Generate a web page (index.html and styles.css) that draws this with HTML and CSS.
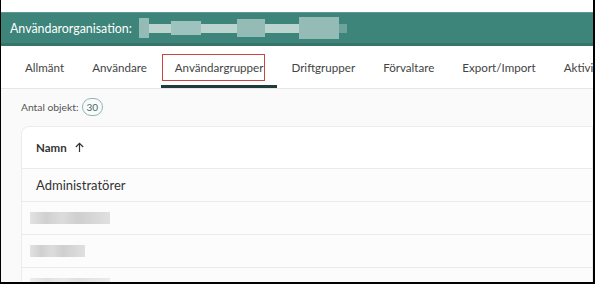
FILE: index.html
```html
<!DOCTYPE html>
<html lang="sv">
<head>
    <meta charset="UTF-8">
    <title>Användarorganisation</title>
    <link rel="stylesheet" href="styles.css">
</head>
<body>
    <div class="screen">
        <div class="top-strip"></div>
        <header class="org-header">
            <span class="org-label">Användarorganisation:</span>
            <span class="blur-name">
                <i class="b1"></i><i class="b2"></i><i class="b3"></i><i class="b4"></i><i class="b5"></i><i class="b6"></i><i class="b7"></i><i class="b8"></i>
            </span>
        </header>
        <nav class="tabs">
            <a class="tab">Allmänt</a>
            <a class="tab">Användare</a>
            <a class="tab active"><span class="outline">Användargrupper</span></a>
            <a class="tab">Driftgrupper</a>
            <a class="tab">Förvaltare</a>
            <a class="tab">Export/Import</a>
            <a class="tab">Aktiviteter</a>
        </nav>
        <main class="content">
            <div class="count">Antal objekt: <span class="badge">30</span></div>
            <div class="table">
                <div class="row head">
                    <span>Namn</span>
                    <svg width="11" height="11" viewBox="0 0 12 12"><path d="M6 11V1.5M2 5.5 6 1.5 10 5.5" fill="none" stroke="#333" stroke-width="1.3"/></svg>
                </div>
                <div class="row">Administratörer</div>
                <div class="row"><span class="blur w80"></span></div>
                <div class="row"><span class="blur w55"></span></div>
                <div class="row"><span class="blur w80 light"></span></div>
            </div>
        </main>
    </div>
</body>
</html>
```

FILE: styles.css
```css
html, body {
    margin: 0;
    padding: 0;
    background: #000;
}
.screen {
    width: 592px;
    height: 282px;
    margin-left: 1px;
    background: #fafafa;
    overflow: hidden;
    font-family: 'Lato', 'Open Sans', sans-serif;
}
.top-strip {
    height: 12px;
    background: #fff;
}
.org-header {
    height: 34px;
    background: #3d847a;
    border-top: 1px solid #5e9990;
    border-bottom: 3px solid #367469;
    box-sizing: border-box;
    display: flex;
    align-items: center;
    padding-left: 9px;
    color: #fff;
    font-size: 12.4px;
}
.org-label {
    margin-right: 7px;
}
.blur-name {
    display: flex;
    align-items: center;
    height: 26px;
}
.blur-name i {
    display: block;
    height: 9px;
    background: rgba(255, 255, 255, 0.6);
}
.blur-name .b1 { width: 10px; height: 20px; background: rgba(255,255,255,0.45); }
.blur-name .b2 { width: 22px; background: rgba(255,255,255,0.65); }
.blur-name .b3 { width: 30px; height: 14px; background: rgba(255,255,255,0.5); }
.blur-name .b4 { width: 36px; background: rgba(255,255,255,0.65); }
.blur-name .b5 { width: 28px; height: 18px; background: rgba(255,255,255,0.45); }
.blur-name .b6 { width: 34px; background: rgba(255,255,255,0.65); }
.blur-name .b7 { width: 40px; height: 22px; background: rgba(255,255,255,0.45); }
.blur-name .b8 { width: 8px; background: rgba(255,255,255,0.25); }
.tabs {
    height: 42px;
    background: #fff;
    border-bottom: 1px solid #e6e6e6;
    display: flex;
    padding-left: 10px;
    white-space: nowrap;
}
.tab {
    padding: 0 14px;
    display: flex;
    align-items: center;
    font-size: 11.6px;
    color: #444;
}
.tab.active {
    border-bottom: 3px solid #1e3c39;
    padding-top: 3px;
    padding-left: 1px;
    padding-right: 12px;
}
.outline {
    border: 1.5px solid #c7463f;
    padding: 6px 1px 6px 12px;
}
.content {
    padding: 9px 0 0 20px;
}
.count {
    font-size: 10.3px;
    color: #555;
    display: flex;
    align-items: center;
    gap: 3px;
}
.badge {
    border: 1px solid #8fb7b1;
    border-radius: 9px;
    padding: 2px 4px;
    font-size: 10px;
    color: #3d6b66;
}
.table {
    margin-top: 10px;
    background: #fcfcfc;
    border: 1px solid #ececec;
    border-radius: 8px 0 0 0;
}
.row {
    height: 32px;
    border-bottom: 1px solid #ebebeb;
    display: flex;
    align-items: center;
    padding-left: 14px;
    font-size: 13px;
    color: #333;
}
.row.head {
    height: 41px;
    background: #fff;
    border-radius: 8px 0 0 0;
    font-weight: bold;
    font-size: 11.5px;
    gap: 7px;
}
.blur {
    display: block;
    height: 12px;
    margin-left: -6px;
    background: linear-gradient(90deg, #e2e2e2 0, #d0d0d0 20%, #dcdcdc 40%, #cfcfcf 60%, #e0e0e0 100%);
}
.w80 { width: 80px; }
.w55 { width: 55px; }
.light { opacity: 0.6; }
```
